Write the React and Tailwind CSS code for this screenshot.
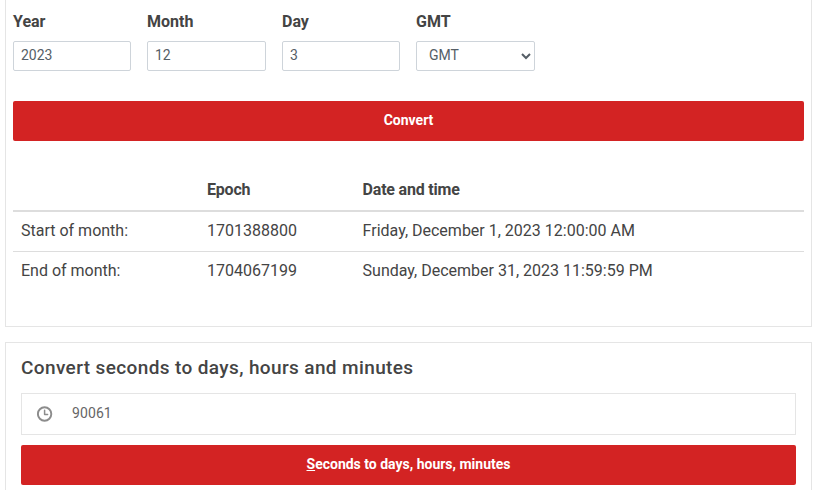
import React from "react";

const labelCls = "block h-[20px] pt-[1px] text-[16px] leading-[20px] font-bold text-[#444444] mb-[10px]";
const inputCls = "block w-full h-[30px] border border-[#ced4da] rounded-[2px] bg-white px-[7px] pb-[2px] text-[14px] text-[#555e66] outline-none";

function Field({ label, value }) {
  return (
    <div>
      <div className={labelCls}>{label}</div>
      <input className={inputCls} defaultValue={value} />
    </div>
  );
}

export default function App() {
  return (
    <div className="w-[819px] h-[490px] overflow-hidden bg-white font-['Roboto',sans-serif] px-[5px] text-[#444444]">
      <div className="w-[807px] h-[327px] border border-t-0 border-[#e5e5e5] px-[7px] pt-[11px]">
        <div className="grid grid-cols-[118px_119px_118px_119px] gap-x-[16px] w-[522px]">
          <Field label="Year" value="2023" />
          <Field label="Month" value="12" />
          <Field label="Day" value="3" />
          <div>
            <div className={labelCls}>GMT</div>
            <select className="block w-full h-[30px] border border-[#ced4da] rounded-[2px] bg-white px-[8px] pb-[2px] text-[14px] text-[#555e66] outline-none">
              <option>GMT</option>
            </select>
          </div>
        </div>
        <button className="block w-[791px] h-[40px] mt-[30px] pb-[2px] bg-[#d32323] rounded-[2px] text-white text-[14px] font-bold text-center">
          Convert
        </button>
        <table className="w-[791px] mt-[20px] table-fixed border-collapse text-[16px] text-[#444444]">
          <colgroup>
            <col className="w-[186px]" />
            <col className="w-[155.6px]" />
            <col />
          </colgroup>
          <thead>
            <tr className="h-[50px] border-b-2 border-[#dddddd]">
              <th></th>
              <th className="text-left font-bold tracking-[-0.2px] px-[8px] pt-[8px]">Epoch</th>
              <th className="text-left font-bold tracking-[-0.2px] px-[8px] pt-[8px]">Date and time</th>
            </tr>
          </thead>
          <tbody>
            <tr className="h-[40px] border-b border-[#dddddd]">
              <td className="px-[8px]">Start of month:</td>
              <td className="px-[8px]">1701388800</td>
              <td className="px-[8px]">Friday, December 1, 2023 12:00:00 AM</td>
            </tr>
            <tr className="h-[40px]">
              <td className="px-[8px]">End of month:</td>
              <td className="px-[8px]">1704067199</td>
              <td className="px-[8px]">Sunday, December 31, 2023 11:59:59 PM</td>
            </tr>
          </tbody>
        </table>
      </div>
      <div className="w-[807px] h-[160px] mt-[15px] border border-[#e5e5e5] px-[15px] pt-[11px]">
        <h2 className="text-[19px] leading-[27px] font-medium tracking-[0.38px] text-[#444444]">
          Convert seconds to days, hours and minutes
        </h2>
        <div className="w-[775px] h-[42px] mt-[12px] border border-[#e5e5e5] flex items-center pl-[15px]">
          <svg width="16" height="16" viewBox="0 0 16 16" fill="none" stroke="#8c8c8c" strokeWidth="1.9" strokeLinecap="round" strokeLinejoin="round" className="mb-[1px]">
            <circle cx="7.6" cy="8" r="6.7" />
            <path d="M7.6 4.2V8.4H10.6" strokeWidth="1.5" />
          </svg>
          <span className="ml-[19px] mb-[1px] text-[14px] tracking-[0.1px] text-[#666666]">90061</span>
        </div>
        <button className="block w-[775px] h-[40px] mt-[10px] pb-[2px] bg-[#d32323] rounded-[2px] text-white text-[14px] font-bold text-center">
          <span className="underline">S</span>econds to days, hours, minutes
        </button>
      </div>
    </div>
  );
}
